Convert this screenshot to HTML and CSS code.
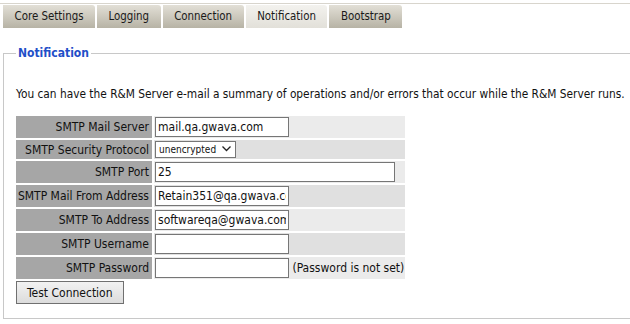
FILE: index.html
```html
<!DOCTYPE html>
<html lang="en">
<head>
    <meta charset="UTF-8">
    <meta name="viewport" content="width=device-width, initial-scale=1.0">
    <title>R&amp;M Server - Notification</title>
    <link rel="stylesheet" href="styles.css">
</head>
<body>
    <ul class="tabs">
        <li class="tab">Core Settings</li>
        <li class="tab">Logging</li>
        <li class="tab">Connection</li>
        <li class="tab active">Notification</li>
        <li class="tab">Bootstrap</li>
    </ul>

    <fieldset class="panel">
        <legend>Notification</legend>
        <p class="intro">You can have the R&amp;M Server e-mail a summary of operations and/or errors that occur while the R&amp;M Server runs.</p>

        <table class="settings">
            <tr class="odd">
                <th>SMTP Mail Server</th>
                <td><input type="text" class="short" value="mail.qa.gwava.com"></td>
            </tr>
            <tr class="even">
                <th>SMTP Security Protocol</th>
                <td>
                    <span class="select-wrap">
                        <select class="proto">
                            <option>unencrypted</option>
                            <option>SSL</option>
                            <option>TLS</option>
                        </select>
                        <svg class="chevron" width="9" height="6" viewBox="0 0 9 6"><path d="M0.5 0.5 L4.5 4.5 L8.5 0.5" fill="none" stroke="#222" stroke-width="1.3"/></svg>
                    </span>
                </td>
            </tr>
            <tr class="odd">
                <th>SMTP Port</th>
                <td><input type="text" class="long" value="25"></td>
            </tr>
            <tr class="even">
                <th>SMTP Mail From Address</th>
                <td><input type="text" class="short" value="Retain351@qa.gwava.com"></td>
            </tr>
            <tr class="odd">
                <th>SMTP To Address</th>
                <td><input type="text" class="short" value="softwareqa@gwava.com"></td>
            </tr>
            <tr class="even">
                <th>SMTP Username</th>
                <td><input type="text" class="short" value=""></td>
            </tr>
            <tr class="odd">
                <th>SMTP Password</th>
                <td><input type="password" class="short" value=""> <span class="note">(Password is not set)</span></td>
            </tr>
        </table>

        <button type="button" class="btn">Test Connection</button>
    </fieldset>
</body>
</html>
```

FILE: styles.css
```css
html {
    overflow: hidden;
}

body {
    margin: 0;
    padding: 3px 0 0 3px;
    background-color: #fff;
    font-family: "DejaVu Sans Condensed", "DejaVu Sans", sans-serif;
    font-size: 11px;
    color: #111;
}

/* tab strip */
.tabs {
    display: flex;
    gap: 2px;
    margin: 0 0 0 -3px;
    padding: 1px 0 0 3px;
    list-style: none;
    border-top: 1px solid #d8d5cd;
}

.tab {
    height: 23px;
    line-height: 23px;
    padding: 0 11.5px;
    background: linear-gradient(#e2dfd6, #b7b3a5);
    border-top-right-radius: 3px;
    color: #1a1a1a;
    font-size: 11.4px;
}

.tab.active {
    background: linear-gradient(#f3f2ee, #e2e0d9);
}

/* main panel */
.panel {
    margin: 18px -20px 0 0;
    padding: 0 12px 14px 12px;
    border: 1px solid #c8c8c8;
}

.panel legend {
    padding: 0 2px;
    color: #1f4fc8;
    font-weight: bold;
    font-size: 12px;
}

.intro {
    margin: 27px 0 13px 0;
    font-size: 11.8px;
    white-space: nowrap;
}

.settings {
    border-spacing: 2px;
    margin-left: -2px;
}

.settings th {
    width: 132px;
    padding: 0 3px 0 1px;
    background-color: #a6a6a6;
    font-weight: normal;
    text-align: right;
    white-space: nowrap;
    font-size: 12px;
}

.settings td {
    width: 248px;
    padding: 1px;
    font-size: 12px;
    white-space: nowrap;
}

.settings tr.odd td {
    background-color: #ebebeb;
}

.settings tr.even td {
    background-color: #e0e0e0;
}

.settings input {
    box-sizing: border-box;
    height: 20px;
    padding: 0 2px;
    border: 1px solid #767676;
    font-family: inherit;
    font-size: 12px;
    color: #111;
    vertical-align: middle;
}

.settings input.short {
    width: 134px;
}

.settings input.long {
    width: 240px;
}

.select-wrap {
    position: relative;
    display: inline-block;
    vertical-align: middle;
}

.proto {
    box-sizing: border-box;
    display: block;
    height: 17px;
    width: 81px;
    padding: 0 16px 0 3px;
    border: 1px solid #767676;
    border-radius: 0;
    background-color: #fff;
    appearance: none;
    font-family: inherit;
    font-size: 10px;
    color: #111;
}

.chevron {
    position: absolute;
    right: 5px;
    top: 5px;
    pointer-events: none;
}

.note {
    font-size: 12px;
}

.btn {
    margin-top: 0;
    height: 23px;
    padding: 0 10px;
    border: 1px solid #707070;
    border-radius: 0;
    background: linear-gradient(#f2f2f2, #dcdcdc);
    font-family: inherit;
    font-size: 12px;
    color: #111;
}
```
